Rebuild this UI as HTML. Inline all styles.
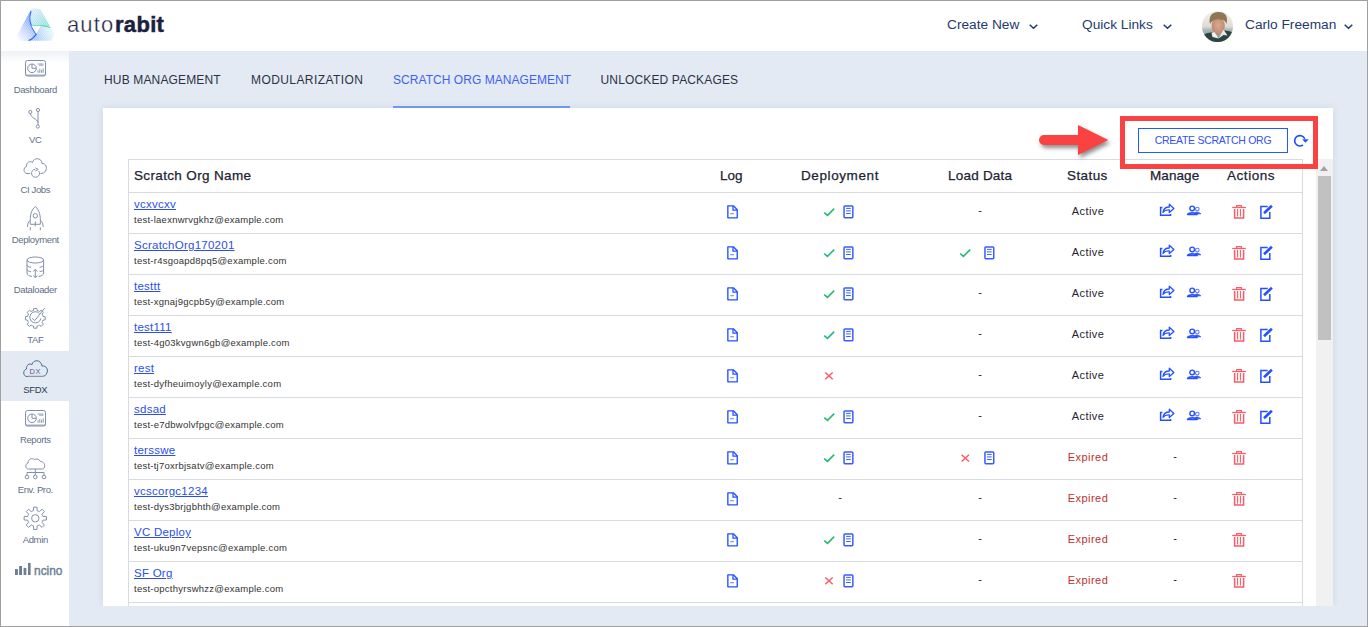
<!DOCTYPE html>
<html><head><meta charset="utf-8">
<style>
*{box-sizing:border-box;margin:0;padding:0}
html,body{width:1368px;height:627px;overflow:hidden;background:#fff}
body{font-family:"Liberation Sans",sans-serif;position:relative;line-height:1}
.a{position:absolute}
#frame{position:absolute;left:0;top:0;width:1368px;height:627px;border:1px solid #a0a0a0;z-index:50;pointer-events:none}
#header{left:0;top:0;width:1368px;height:51px;background:#fff}
#content{left:69px;top:51px;width:1299px;height:576px;background:#e4eaf3}
#side{left:0;top:51px;width:69px;height:576px;background:#fff}
.sgrad{left:0;top:51px;width:69px;height:12px;background:linear-gradient(#eef1f5,#fff)}
.nav{font-size:13.7px;color:#1f3a6e;top:18px;white-space:nowrap}
.chev{position:absolute;width:7px;height:7px;border-right:1.5px solid #243a63;border-bottom:1.5px solid #243a63;transform:rotate(45deg)}
.tab{font-size:12px;color:#2b3245;top:74px;white-space:nowrap;letter-spacing:0.05px}
.card{left:103px;top:108px;width:1230px;height:498px;background:#fff;box-shadow:0 0 7px rgba(140,155,180,0.22)}
.lbl{position:absolute;left:0.8px;width:69px;text-align:center;font-size:9.5px;letter-spacing:-0.35px;color:#5f6f86;white-space:nowrap}
.hd{font-size:13.5px;font-weight:normal;-webkit-text-stroke:0.25px #1c2333;color:#1c2333;top:169px;white-space:nowrap}
.ln{position:absolute;left:128px;width:1175px;height:1px;background:#d8dbe2}
.nm{position:absolute;left:134px;font-size:11.5px;letter-spacing:0.25px;color:#2b4fe8;text-decoration:underline;white-space:nowrap}
.em{position:absolute;left:134px;font-size:9.5px;letter-spacing:0.25px;color:#333;white-space:nowrap}
.st{position:absolute;font-size:11px;letter-spacing:0.45px;white-space:nowrap;width:80px;text-align:center;left:1048px}
.dash{position:absolute;font-size:11px;color:#222;width:20px;text-align:center}
svg{position:absolute;overflow:visible}
</style></head><body>
<div id="frame"></div>
<div class="a" id="header"></div>
<div class="a" id="content"></div>
<div class="a" id="side"></div>
<div class="a sgrad"></div>

<!-- logo --><svg style="left:0;top:0" width="60" height="50" viewBox="0 0 60 50">
  <defs>
    <linearGradient id="lgL" x1="17" y1="38" x2="33" y2="24" gradientUnits="userSpaceOnUse">
      <stop offset="0" stop-color="#dfe8ff" stop-opacity="0.4"/><stop offset="1" stop-color="#3f78ff" stop-opacity="0.7"/>
    </linearGradient>
    <linearGradient id="lgT" x1="31" y1="10" x2="50" y2="28" gradientUnits="userSpaceOnUse">
      <stop offset="0" stop-color="#a9c9f5" stop-opacity="0.45"/><stop offset="1" stop-color="#43d3bd" stop-opacity="0.75"/>
    </linearGradient>
    <linearGradient id="lgB" x1="36" y1="38" x2="54" y2="32" gradientUnits="userSpaceOnUse">
      <stop offset="0" stop-color="#4f8cff" stop-opacity="0.55"/><stop offset="1" stop-color="#b5efe5" stop-opacity="0.35"/>
    </linearGradient>
    <pattern id="hatch" width="1.6" height="1.6" patternUnits="userSpaceOnUse" patternTransform="rotate(35)">
      <rect width="0.7" height="1.6" fill="#fff" opacity="0.55"/>
    </pattern>
  </defs>
  <path d="M31 9.5 C28.5 16 28.5 24 36 34 L29 41 L21 41 C19 39 18 37 17.4 34.5 Z" fill="url(#lgL)"/>
  <path d="M31 9 C33 8.3 38 8.3 40.5 9.5 L54.4 33.9 C52 29 50 26.5 49 26 L31.4 25.6 C30.2 21 30 15 30.8 12.7 Z" fill="url(#lgT)"/>
  <path d="M36 34 L40.8 25.6 L49 26 C51 27.5 53.5 31 54.4 34 C53.5 37 52.5 39 51.4 40.7 L29 40.7 Z" fill="url(#lgB)"/>
  <path d="M17 8 H56 V42 H17 Z" fill="url(#hatch)"/>
  <path d="M31 11 C28.8 18 29 24 36.2 34.3 C34 37.5 31.5 39.5 28.5 40.5" fill="none" stroke="#2f6dff" stroke-width="1.2"/>
  <path d="M31.4 25.6 C38 25.4 45 25.4 50 27.5" fill="none" stroke="#3fd4b4" stroke-width="1"/>
  <path d="M31.4 25.8 L40.8 25.8 L36 33.5 Z" fill="#fff"/>
</svg>
<svg style="left:60px;top:5px" width="120" height="40" viewBox="60 5 120 40"><text x="67" y="32" font-family="Liberation Sans" font-size="22" letter-spacing="1.1" fill="#1b2240" stroke="#fff" stroke-width="0.35">auto</text><text x="115" y="32" font-family="Liberation Sans" font-weight="bold" font-size="22" letter-spacing="0.3" fill="#1b2240" stroke="#1b2240" stroke-width="0.5">rabit</text></svg>

<!-- nav -->
<div class="a nav" style="left:947px">Create New</div>
<svg style="left:1028.5px;top:24px" width="9" height="5" viewBox="0 0 9 5"><path d="M0.7 0.7 L4.5 4.3 L8.3 0.7" fill="none" stroke="#1f3a6e" stroke-width="1.5"/></svg>
<div class="a nav" style="left:1082px">Quick Links</div>
<svg style="left:1162.5px;top:24px" width="9" height="5" viewBox="0 0 9 5"><path d="M0.7 0.7 L4.5 4.3 L8.3 0.7" fill="none" stroke="#1f3a6e" stroke-width="1.5"/></svg>
<svg style="left:1202px;top:10.75px" width="31" height="31" viewBox="0 0 31 31">
<defs><clipPath id="avc"><circle cx="15.5" cy="15.5" r="15.5"/></clipPath>
<linearGradient id="avbg" x1="0" y1="0" x2="0" y2="1"><stop offset="0" stop-color="#f3f0ec"/><stop offset="0.5" stop-color="#e0dbd4"/><stop offset="0.62" stop-color="#a9b4b6"/><stop offset="1" stop-color="#7d8c90"/></linearGradient>
<radialGradient id="avface" cx="0.5" cy="0.45" r="0.6"><stop offset="0" stop-color="#d9aa90"/><stop offset="1" stop-color="#b8856a"/></radialGradient>
</defs>
<g clip-path="url(#avc)">
<rect width="31" height="31" fill="url(#avbg)"/>
<ellipse cx="16.2" cy="15" rx="6.6" ry="9" fill="url(#avface)"/>
<path d="M8 13 C6 4 11.5 0.5 17 1 C23 1 26.5 5 24.5 13 C23.5 10.5 22 8.5 20 9 C17 8 14 8.2 11.5 9.5 C10 10.5 9 11.5 8 13 Z" fill="#8f7656"/>
<path d="M0 31 V25 C3 22.5 6 21.5 10 21.5 L16.5 27.5 L22 19.5 C26 19.5 29.5 20.5 31 22 V31 Z" fill="#2c4540"/>
<path d="M9.5 22.3 L12.5 21 L16.5 27.5 L10.5 26 Z" fill="#f0f0f0"/>
<path d="M21.5 18.5 L25.5 24.5 L21.5 24 L16.5 27.5 Z" fill="#e8e8e8"/>
</g></svg>
<div class="a nav" style="left:1245px">Carlo Freeman</div>
<svg style="left:1343.5px;top:24px" width="9" height="5" viewBox="0 0 9 5"><path d="M0.7 0.7 L4.5 4.3 L8.3 0.7" fill="none" stroke="#1f3a6e" stroke-width="1.5"/></svg>

<!-- sidebar items -->
<div class="a" style="left:0;top:351px;width:69px;height:50px;background:#e4eaf3"></div>
<div class="a" style="left:0;top:51px;width:69px;height:560px">
  <div class="lbl" style="top:34px">Dashboard</div>
  <div class="lbl" style="top:84px">VC</div>
  <div class="lbl" style="top:134px">CI Jobs</div>
  <div class="lbl" style="top:184px">Deployment</div>
  <div class="lbl" style="top:234px">Dataloader</div>
  <div class="lbl" style="top:284px">TAF</div>
  <div class="lbl" style="top:334px;color:#2c3a55">SFDX</div>
  <div class="lbl" style="top:384px">Reports</div>
  <div class="lbl" style="top:434px">Env. Pro.</div>
  <div class="lbl" style="top:484px">Admin</div>
</div>

<!--side--><svg style="left:0;top:0" width="69" height="627" viewBox="0 0 69 627"><rect x="25.5" y="60.5" width="20" height="15.5" rx="2" fill="none" stroke="#8190aa" stroke-width="1"/><path d="M25.5 75.2 H45.5" stroke="#8190aa" stroke-width="1.6" opacity="0.6"/><circle cx="32" cy="68.3" r="4.3" fill="none" stroke="#8190aa" stroke-width="1"/><path d="M32 64.0 L32 68.3 L36.3 68.3" fill="none" stroke="#8190aa" stroke-width="1"/><path d="M37.5 64 H43.5 M39 65.2 H43.5" stroke="#8190aa" stroke-width="0.8"/><path d="M38 72.8 V70.3" stroke="#8190aa" stroke-width="0.9"/><path d="M39.8 72.8 V68.8" stroke="#8190aa" stroke-width="0.9"/><path d="M41.6 72.8 V69.8" stroke="#8190aa" stroke-width="0.9"/><path d="M43.2 72.8 V68.3" stroke="#8190aa" stroke-width="0.9"/><rect x="25.5" y="410.5" width="20" height="15.5" rx="2" fill="none" stroke="#8190aa" stroke-width="1"/><path d="M25.5 425.2 H45.5" stroke="#8190aa" stroke-width="1.6" opacity="0.6"/><circle cx="32" cy="418.3" r="4.3" fill="none" stroke="#8190aa" stroke-width="1"/><path d="M32 414.0 L32 418.3 L36.3 418.3" fill="none" stroke="#8190aa" stroke-width="1"/><path d="M37.5 414 H43.5 M39 415.2 H43.5" stroke="#8190aa" stroke-width="0.8"/><path d="M38 422.8 V420.3" stroke="#8190aa" stroke-width="0.9"/><path d="M39.8 422.8 V418.8" stroke="#8190aa" stroke-width="0.9"/><path d="M41.6 422.8 V419.8" stroke="#8190aa" stroke-width="0.9"/><path d="M43.2 422.8 V418.3" stroke="#8190aa" stroke-width="0.9"/><circle cx="30.3" cy="112" r="1.6" fill="none" stroke="#8190aa" stroke-width="1"/><circle cx="38" cy="110" r="1.6" fill="none" stroke="#8190aa" stroke-width="1"/><circle cx="37.8" cy="126.5" r="1.6" fill="none" stroke="#8190aa" stroke-width="1"/><path d="M38 111.6 V124.9 M30.5 113.6 C30.5 118 37 118.5 38 122.5" fill="none" stroke="#8190aa" stroke-width="1"/><path d="M30 173.5 H27 C23.5 173.5 22.8 167.5 26.5 166.5 C26 162.5 30 160.5 32.5 162.5 C33.5 157.5 41.5 157 42 163.5 C46 163 47.5 168 45.5 171 C44.5 173 42.5 173.5 40.5 173.5" fill="none" stroke="#8190aa" stroke-width="1"/><path d="M38.8 171 A4 4 0 1 1 35.3 169.3" fill="none" stroke="#8190aa" stroke-width="1"/><path d="M35.3 167.8 L38.3 169.5 L35.3 171" fill="none" stroke="#8190aa" stroke-width="1"/><path d="M35.3 206.5 C31 210 29.8 216 30.3 224.3 H40.3 C40.8 216 39.6 210 35.3 206.5 Z" fill="none" stroke="#8190aa" stroke-width="1"/><circle cx="35.3" cy="215.8" r="2.2" fill="none" stroke="#8190aa" stroke-width="1"/><path d="M30 220.5 C28 222 27.5 224.5 27.5 227 M40.6 220.5 C42.6 222 43.1 224.5 43.1 227 M35.3 221.5 V226.3 M30.3 227.2 V230.3 M40.3 227.2 V230.3" fill="none" stroke="#8190aa" stroke-width="1"/><ellipse cx="35.3" cy="260" rx="8.3" ry="3" fill="none" stroke="#8190aa" stroke-width="1"/><path d="M27 260 V273 C27 275 29 276 32 276.5 M43.6 260 V273 C43.6 275 41.6 276 38.6 276.5" fill="none" stroke="#8190aa" stroke-width="1"/><path d="M27 265 C27 266.5 29 267 31 267.3 M43.6 265 C43.6 266.5 41.6 267 39.6 267.3 M27 269.5 C27 271 29 271.3 31 271.6 M43.6 269.5 C43.6 271 41.6 271.3 39.6 271.6" fill="none" stroke="#8190aa" stroke-width="1"/><path d="M35.3 269.5 V277.5 M33.3 271.5 L35.3 269.3 L37.3 271.5 M33.3 275.5 L35.3 277.7 L37.3 275.5" fill="none" stroke="#8190aa" stroke-width="1"/><path d="M32.24 310.91 L33.48 310.51 L33.71 308.43 L36.89 308.43 L37.12 310.51 L38.36 310.91 L39.52 311.50 L41.15 310.19 L43.41 312.45 L42.10 314.08 L42.69 315.24 L43.09 316.48 L45.17 316.71 L45.17 319.89 L43.09 320.12 L42.69 321.36 L42.10 322.52 L43.41 324.15 L41.15 326.41 L39.52 325.10 L38.36 325.69 L37.12 326.09 L36.89 328.17 L33.71 328.17 L33.48 326.09 L32.24 325.69 L31.08 325.10 L29.45 326.41 L27.19 324.15 L28.50 322.52 L27.91 321.36 L27.51 320.12 L25.43 319.89 L25.43 316.71 L27.51 316.48 L27.91 315.24 L28.50 314.08 L27.19 312.45 L29.45 310.19 L31.08 311.50 Z" fill="none" stroke="#8190aa" stroke-width="1" stroke-linejoin="round"/><path d="M39.5 313.5 A5.6 5.6 0 1 0 40.9 318.3" fill="none" stroke="#8190aa" stroke-width="1"/><path d="M32.2 318.3 L34.8 320.6 L44.6 308.2" fill="none" stroke="#8190aa" stroke-width="1"/><path d="M27 376.5 C23 376.5 22.5 370 26.5 369 C26 365 29.5 363 32 364.5 C33 359.5 41 359 42 366 C46.5 365.5 48 369.5 47.2 372 C46.5 375 44.5 376.5 42 376.5 Z" fill="none" stroke="#4d6a92" stroke-width="1"/><path d="M27.5 376.3 H44" stroke="#8fa0b5" stroke-width="1.2"/><text x="29.5" y="373.7" font-family="Liberation Sans" font-size="7.5" fill="#5a4f8a">D</text><text x="35.5" y="373.7" font-family="Liberation Sans" font-size="7.5" fill="#4d6a92">X</text><path d="M28.5 469 C25 469 25 463.5 28 463 C28 459 32 457.5 34.5 459.5 C36 458.5 39.5 459 40.5 461.5 C43.5 461.5 45.5 464.5 44.5 467 C44 468.5 43 469 41.5 469 Z" fill="none" stroke="#8190aa" stroke-width="1"/><path d="M35.3 469 V475 M27 475 V472.5 H44 V475" fill="none" stroke="#8190aa" stroke-width="1"/><circle cx="27" cy="477" r="1.8" fill="none" stroke="#8190aa" stroke-width="1"/><circle cx="35.3" cy="477" r="1.8" fill="none" stroke="#8190aa" stroke-width="1"/><circle cx="44" cy="477" r="1.8" fill="none" stroke="#8190aa" stroke-width="1"/><path d="M32.32 511.09 L33.42 510.73 L33.66 507.12 L36.94 507.12 L37.18 510.73 L38.28 511.09 L39.32 511.62 L42.04 509.23 L44.37 511.56 L41.98 514.28 L42.51 515.32 L42.87 516.42 L46.48 516.66 L46.48 519.94 L42.87 520.18 L42.51 521.28 L41.98 522.32 L44.37 525.04 L42.04 527.37 L39.32 524.98 L38.28 525.51 L37.18 525.87 L36.94 529.48 L33.66 529.48 L33.42 525.87 L32.32 525.51 L31.28 524.98 L28.56 527.37 L26.23 525.04 L28.62 522.32 L28.09 521.28 L27.73 520.18 L24.12 519.94 L24.12 516.66 L27.73 516.42 L28.09 515.32 L28.62 514.28 L26.23 511.56 L28.56 509.23 L31.28 511.62 Z" fill="none" stroke="#8190aa" stroke-width="1" stroke-linejoin="round"/><circle cx="35.3" cy="518.3" r="3.7" fill="none" stroke="#8190aa" stroke-width="1"/><rect x="15" y="569.1" width="2.8999999999999986" height="5.899999999999977" fill="#6d7f95"/><rect x="19.1" y="566" width="2.8999999999999986" height="9" fill="#6d7f95"/><rect x="23.6" y="567.9" width="2.6999999999999993" height="7.100000000000023" fill="#6d7f95"/><rect x="28" y="562.9" width="2.6000000000000014" height="12.100000000000023" fill="#6d7f95"/><text x="34" y="575" font-family="Liberation Sans" font-weight="normal" font-size="13.5" fill="#6d7f95" stroke="#6d7f95" stroke-width="0.45" textLength="28.5" lengthAdjust="spacingAndGlyphs">ncino</text></svg><!--/side-->
<!-- tabs -->
<div class="a tab" style="left:104px;letter-spacing:0.15px">HUB MANAGEMENT</div>
<div class="a tab" style="left:251px;letter-spacing:0.42px">MODULARIZATION</div>
<div class="a tab" style="left:393px;color:#3d62f0">SCRATCH ORG MANAGEMENT</div>
<div class="a tab" style="left:600.5px;letter-spacing:0.15px">UNLOCKED PACKAGES</div>
<div class="a" style="left:393px;top:106px;width:177px;height:2px;background:#6d9bf1"></div>

<div class="a card"></div>
<div class="a" id="shcover" style="left:69px;top:606px;width:1299px;height:21px;background:#e4eaf3"></div>

<!-- table frame -->
<div class="a" style="left:128px;top:159px;width:1175px;height:447px;border:1px solid #d8dbe2;border-bottom:none"></div>
<div class="ln" style="top:192px"></div>

<div class="a hd" style="left:134px;letter-spacing:0.35px">Scratch Org Name</div>
<div class="a hd" style="left:720px;letter-spacing:0.05px">Log</div>
<div class="a hd" style="left:801px;letter-spacing:0.6px">Deployment</div>
<div class="a hd" style="left:948px;letter-spacing:0.22px">Load Data</div>
<div class="a hd" style="left:1067px;letter-spacing:0.42px">Status</div>
<div class="a hd" style="left:1150px;letter-spacing:0.08px">Manage</div>
<div class="a hd" style="left:1227px;letter-spacing:0.55px">Actions</div>

<div id="rows">
<div class="ln" style="top:233px"></div>
<div class="nm" style="top:199.1px">vcxvcxv</div>
<div class="em" style="top:214.96px">test-laexnwrvgkhz@example.com</div>
<div class="dash" style="left:970px;top:205px">-</div>
<div class="st" style="top:205.7px;color:#1f2533">Active</div>
<svg style="left:700px;top:192px" width="600" height="41" viewBox="0 0 600 41"><path d="M27.85 13.85 H33.4 L37.25 17.7 V25.85 H27.85 Z" fill="none" stroke="#2450ff" stroke-width="1.35" stroke-linejoin="round"/><path d="M33 14 V18.2 H37.2" fill="none" stroke="#2450ff" stroke-width="1.25"/><path d="M30.2 21.7 H33.9" stroke="#6f86ff" stroke-width="1.1"/><path d="M124.2 20.6 L127.5 23.3 L134.2 16.6" fill="none" stroke="#27b97a" stroke-width="1.6"/><rect x="144.05" y="14.05" width="8.8" height="11.6" rx="0.8" fill="none" stroke="#3a5cff" stroke-width="1.5"/><path d="M146.1 16.4 H150.8 M146.1 18.9 H150.8 M146.1 21.5 H150.8" stroke="#2450ff" stroke-width="0.9"/><path d="M462.4 15.5 H460.6 V23.2 H470.6 V22" fill="none" stroke="#2450ff" stroke-width="1.5"/><path d="M463 20.4 C463.5 17 466 15 469.3 15 V12.2 L473.9 16.4 L469.3 20.6 V18 C466.5 17.8 464.5 18.5 463 20.4 Z" fill="none" stroke="#2450ff" stroke-width="1.3" stroke-linejoin="round"/><circle cx="497.3" cy="17.1" r="1.8" fill="none" stroke="#5f7bff" stroke-width="1.1"/><path d="M495.5 20.3 C497.5 20 499.5 20.5 500.8 21.8 L496 21.8 Z" fill="#2450ff" stroke="#2450ff" stroke-width="0.8"/><circle cx="492.2" cy="16.4" r="2.3" fill="#fff" stroke="#2450ff" stroke-width="1.4"/><path d="M487.5 22.6 C488 20 496.6 20 497.1 22.6 Z" fill="#fff" stroke="#2450ff" stroke-width="1.5" stroke-linejoin="round"/><path d="M532.2 15.5 H545.9" stroke="#f95c66" stroke-width="1.3"/><path d="M536.6 15.2 V13.6 H541.4 V15.2" fill="none" stroke="#f95c66" stroke-width="1.1"/><path d="M534.6 17.1 V25.9 H543.6 V17.1" fill="none" stroke="#f95c66" stroke-width="1.5"/><path d="M537.6 17.1 V24.6 M540.4 17.1 V24.6" stroke="#f95c66" stroke-width="1.1"/><path d="M567.7 14.4 H560.9 V26.3 H569.8 V20" fill="none" stroke="#2450ff" stroke-width="1.5"/><path d="M564 21.3 L571.9 13.7" fill="none" stroke="#2450ff" stroke-width="2.6"/></svg>
<div class="ln" style="top:274px"></div>
<div class="nm" style="top:240.1px">ScratchOrg170201</div>
<div class="em" style="top:255.96px">test-r4sgoapd8pq5@example.com</div>
<div class="st" style="top:246.7px;color:#1f2533">Active</div>
<svg style="left:700px;top:233px" width="600" height="41" viewBox="0 0 600 41"><path d="M27.85 13.85 H33.4 L37.25 17.7 V25.85 H27.85 Z" fill="none" stroke="#2450ff" stroke-width="1.35" stroke-linejoin="round"/><path d="M33 14 V18.2 H37.2" fill="none" stroke="#2450ff" stroke-width="1.25"/><path d="M30.2 21.7 H33.9" stroke="#6f86ff" stroke-width="1.1"/><path d="M124.2 20.6 L127.5 23.3 L134.2 16.6" fill="none" stroke="#27b97a" stroke-width="1.6"/><rect x="144.05" y="14.05" width="8.8" height="11.6" rx="0.8" fill="none" stroke="#3a5cff" stroke-width="1.5"/><path d="M146.1 16.4 H150.8 M146.1 18.9 H150.8 M146.1 21.5 H150.8" stroke="#2450ff" stroke-width="0.9"/><path d="M260.2 20.6 L263.5 23.3 L270.2 16.6" fill="none" stroke="#27b97a" stroke-width="1.6"/><rect x="284.95000000000005" y="14.05" width="8.8" height="11.6" rx="0.8" fill="none" stroke="#3a5cff" stroke-width="1.5"/><path d="M287.0 16.4 H291.70000000000005 M287.0 18.9 H291.70000000000005 M287.0 21.5 H291.70000000000005" stroke="#2450ff" stroke-width="0.9"/><path d="M462.4 15.5 H460.6 V23.2 H470.6 V22" fill="none" stroke="#2450ff" stroke-width="1.5"/><path d="M463 20.4 C463.5 17 466 15 469.3 15 V12.2 L473.9 16.4 L469.3 20.6 V18 C466.5 17.8 464.5 18.5 463 20.4 Z" fill="none" stroke="#2450ff" stroke-width="1.3" stroke-linejoin="round"/><circle cx="497.3" cy="17.1" r="1.8" fill="none" stroke="#5f7bff" stroke-width="1.1"/><path d="M495.5 20.3 C497.5 20 499.5 20.5 500.8 21.8 L496 21.8 Z" fill="#2450ff" stroke="#2450ff" stroke-width="0.8"/><circle cx="492.2" cy="16.4" r="2.3" fill="#fff" stroke="#2450ff" stroke-width="1.4"/><path d="M487.5 22.6 C488 20 496.6 20 497.1 22.6 Z" fill="#fff" stroke="#2450ff" stroke-width="1.5" stroke-linejoin="round"/><path d="M532.2 15.5 H545.9" stroke="#f95c66" stroke-width="1.3"/><path d="M536.6 15.2 V13.6 H541.4 V15.2" fill="none" stroke="#f95c66" stroke-width="1.1"/><path d="M534.6 17.1 V25.9 H543.6 V17.1" fill="none" stroke="#f95c66" stroke-width="1.5"/><path d="M537.6 17.1 V24.6 M540.4 17.1 V24.6" stroke="#f95c66" stroke-width="1.1"/><path d="M567.7 14.4 H560.9 V26.3 H569.8 V20" fill="none" stroke="#2450ff" stroke-width="1.5"/><path d="M564 21.3 L571.9 13.7" fill="none" stroke="#2450ff" stroke-width="2.6"/></svg>
<div class="ln" style="top:315px"></div>
<div class="nm" style="top:281.1px">testtt</div>
<div class="em" style="top:296.96px">test-xgnaj9gcpb5y@example.com</div>
<div class="dash" style="left:970px;top:287px">-</div>
<div class="st" style="top:287.7px;color:#1f2533">Active</div>
<svg style="left:700px;top:274px" width="600" height="41" viewBox="0 0 600 41"><path d="M27.85 13.85 H33.4 L37.25 17.7 V25.85 H27.85 Z" fill="none" stroke="#2450ff" stroke-width="1.35" stroke-linejoin="round"/><path d="M33 14 V18.2 H37.2" fill="none" stroke="#2450ff" stroke-width="1.25"/><path d="M30.2 21.7 H33.9" stroke="#6f86ff" stroke-width="1.1"/><path d="M124.2 20.6 L127.5 23.3 L134.2 16.6" fill="none" stroke="#27b97a" stroke-width="1.6"/><rect x="144.05" y="14.05" width="8.8" height="11.6" rx="0.8" fill="none" stroke="#3a5cff" stroke-width="1.5"/><path d="M146.1 16.4 H150.8 M146.1 18.9 H150.8 M146.1 21.5 H150.8" stroke="#2450ff" stroke-width="0.9"/><path d="M462.4 15.5 H460.6 V23.2 H470.6 V22" fill="none" stroke="#2450ff" stroke-width="1.5"/><path d="M463 20.4 C463.5 17 466 15 469.3 15 V12.2 L473.9 16.4 L469.3 20.6 V18 C466.5 17.8 464.5 18.5 463 20.4 Z" fill="none" stroke="#2450ff" stroke-width="1.3" stroke-linejoin="round"/><circle cx="497.3" cy="17.1" r="1.8" fill="none" stroke="#5f7bff" stroke-width="1.1"/><path d="M495.5 20.3 C497.5 20 499.5 20.5 500.8 21.8 L496 21.8 Z" fill="#2450ff" stroke="#2450ff" stroke-width="0.8"/><circle cx="492.2" cy="16.4" r="2.3" fill="#fff" stroke="#2450ff" stroke-width="1.4"/><path d="M487.5 22.6 C488 20 496.6 20 497.1 22.6 Z" fill="#fff" stroke="#2450ff" stroke-width="1.5" stroke-linejoin="round"/><path d="M532.2 15.5 H545.9" stroke="#f95c66" stroke-width="1.3"/><path d="M536.6 15.2 V13.6 H541.4 V15.2" fill="none" stroke="#f95c66" stroke-width="1.1"/><path d="M534.6 17.1 V25.9 H543.6 V17.1" fill="none" stroke="#f95c66" stroke-width="1.5"/><path d="M537.6 17.1 V24.6 M540.4 17.1 V24.6" stroke="#f95c66" stroke-width="1.1"/><path d="M567.7 14.4 H560.9 V26.3 H569.8 V20" fill="none" stroke="#2450ff" stroke-width="1.5"/><path d="M564 21.3 L571.9 13.7" fill="none" stroke="#2450ff" stroke-width="2.6"/></svg>
<div class="ln" style="top:356px"></div>
<div class="nm" style="top:322.1px">test111</div>
<div class="em" style="top:337.96px">test-4g03kvgwn6gb@example.com</div>
<div class="dash" style="left:970px;top:328px">-</div>
<div class="st" style="top:328.7px;color:#1f2533">Active</div>
<svg style="left:700px;top:315px" width="600" height="41" viewBox="0 0 600 41"><path d="M27.85 13.85 H33.4 L37.25 17.7 V25.85 H27.85 Z" fill="none" stroke="#2450ff" stroke-width="1.35" stroke-linejoin="round"/><path d="M33 14 V18.2 H37.2" fill="none" stroke="#2450ff" stroke-width="1.25"/><path d="M30.2 21.7 H33.9" stroke="#6f86ff" stroke-width="1.1"/><path d="M124.2 20.6 L127.5 23.3 L134.2 16.6" fill="none" stroke="#27b97a" stroke-width="1.6"/><rect x="144.05" y="14.05" width="8.8" height="11.6" rx="0.8" fill="none" stroke="#3a5cff" stroke-width="1.5"/><path d="M146.1 16.4 H150.8 M146.1 18.9 H150.8 M146.1 21.5 H150.8" stroke="#2450ff" stroke-width="0.9"/><path d="M462.4 15.5 H460.6 V23.2 H470.6 V22" fill="none" stroke="#2450ff" stroke-width="1.5"/><path d="M463 20.4 C463.5 17 466 15 469.3 15 V12.2 L473.9 16.4 L469.3 20.6 V18 C466.5 17.8 464.5 18.5 463 20.4 Z" fill="none" stroke="#2450ff" stroke-width="1.3" stroke-linejoin="round"/><circle cx="497.3" cy="17.1" r="1.8" fill="none" stroke="#5f7bff" stroke-width="1.1"/><path d="M495.5 20.3 C497.5 20 499.5 20.5 500.8 21.8 L496 21.8 Z" fill="#2450ff" stroke="#2450ff" stroke-width="0.8"/><circle cx="492.2" cy="16.4" r="2.3" fill="#fff" stroke="#2450ff" stroke-width="1.4"/><path d="M487.5 22.6 C488 20 496.6 20 497.1 22.6 Z" fill="#fff" stroke="#2450ff" stroke-width="1.5" stroke-linejoin="round"/><path d="M532.2 15.5 H545.9" stroke="#f95c66" stroke-width="1.3"/><path d="M536.6 15.2 V13.6 H541.4 V15.2" fill="none" stroke="#f95c66" stroke-width="1.1"/><path d="M534.6 17.1 V25.9 H543.6 V17.1" fill="none" stroke="#f95c66" stroke-width="1.5"/><path d="M537.6 17.1 V24.6 M540.4 17.1 V24.6" stroke="#f95c66" stroke-width="1.1"/><path d="M567.7 14.4 H560.9 V26.3 H569.8 V20" fill="none" stroke="#2450ff" stroke-width="1.5"/><path d="M564 21.3 L571.9 13.7" fill="none" stroke="#2450ff" stroke-width="2.6"/></svg>
<div class="ln" style="top:397px"></div>
<div class="nm" style="top:363.1px">rest</div>
<div class="em" style="top:378.96px">test-dyfheuimoyly@example.com</div>
<div class="dash" style="left:970px;top:369px">-</div>
<div class="st" style="top:369.7px;color:#1f2533">Active</div>
<svg style="left:700px;top:356px" width="600" height="41" viewBox="0 0 600 41"><path d="M27.85 13.85 H33.4 L37.25 17.7 V25.85 H27.85 Z" fill="none" stroke="#2450ff" stroke-width="1.35" stroke-linejoin="round"/><path d="M33 14 V18.2 H37.2" fill="none" stroke="#2450ff" stroke-width="1.25"/><path d="M30.2 21.7 H33.9" stroke="#6f86ff" stroke-width="1.1"/><path d="M125.3 16.5 L132.7 23.3 M132.7 16.5 L125.3 23.3" fill="none" stroke="#f95c66" stroke-width="1.5"/><path d="M462.4 15.5 H460.6 V23.2 H470.6 V22" fill="none" stroke="#2450ff" stroke-width="1.5"/><path d="M463 20.4 C463.5 17 466 15 469.3 15 V12.2 L473.9 16.4 L469.3 20.6 V18 C466.5 17.8 464.5 18.5 463 20.4 Z" fill="none" stroke="#2450ff" stroke-width="1.3" stroke-linejoin="round"/><circle cx="497.3" cy="17.1" r="1.8" fill="none" stroke="#5f7bff" stroke-width="1.1"/><path d="M495.5 20.3 C497.5 20 499.5 20.5 500.8 21.8 L496 21.8 Z" fill="#2450ff" stroke="#2450ff" stroke-width="0.8"/><circle cx="492.2" cy="16.4" r="2.3" fill="#fff" stroke="#2450ff" stroke-width="1.4"/><path d="M487.5 22.6 C488 20 496.6 20 497.1 22.6 Z" fill="#fff" stroke="#2450ff" stroke-width="1.5" stroke-linejoin="round"/><path d="M532.2 15.5 H545.9" stroke="#f95c66" stroke-width="1.3"/><path d="M536.6 15.2 V13.6 H541.4 V15.2" fill="none" stroke="#f95c66" stroke-width="1.1"/><path d="M534.6 17.1 V25.9 H543.6 V17.1" fill="none" stroke="#f95c66" stroke-width="1.5"/><path d="M537.6 17.1 V24.6 M540.4 17.1 V24.6" stroke="#f95c66" stroke-width="1.1"/><path d="M567.7 14.4 H560.9 V26.3 H569.8 V20" fill="none" stroke="#2450ff" stroke-width="1.5"/><path d="M564 21.3 L571.9 13.7" fill="none" stroke="#2450ff" stroke-width="2.6"/></svg>
<div class="ln" style="top:438px"></div>
<div class="nm" style="top:404.1px">sdsad</div>
<div class="em" style="top:419.96px">test-e7dbwolvfpgc@example.com</div>
<div class="dash" style="left:970px;top:410px">-</div>
<div class="st" style="top:410.7px;color:#1f2533">Active</div>
<svg style="left:700px;top:397px" width="600" height="41" viewBox="0 0 600 41"><path d="M27.85 13.85 H33.4 L37.25 17.7 V25.85 H27.85 Z" fill="none" stroke="#2450ff" stroke-width="1.35" stroke-linejoin="round"/><path d="M33 14 V18.2 H37.2" fill="none" stroke="#2450ff" stroke-width="1.25"/><path d="M30.2 21.7 H33.9" stroke="#6f86ff" stroke-width="1.1"/><path d="M124.2 20.6 L127.5 23.3 L134.2 16.6" fill="none" stroke="#27b97a" stroke-width="1.6"/><rect x="144.05" y="14.05" width="8.8" height="11.6" rx="0.8" fill="none" stroke="#3a5cff" stroke-width="1.5"/><path d="M146.1 16.4 H150.8 M146.1 18.9 H150.8 M146.1 21.5 H150.8" stroke="#2450ff" stroke-width="0.9"/><path d="M462.4 15.5 H460.6 V23.2 H470.6 V22" fill="none" stroke="#2450ff" stroke-width="1.5"/><path d="M463 20.4 C463.5 17 466 15 469.3 15 V12.2 L473.9 16.4 L469.3 20.6 V18 C466.5 17.8 464.5 18.5 463 20.4 Z" fill="none" stroke="#2450ff" stroke-width="1.3" stroke-linejoin="round"/><circle cx="497.3" cy="17.1" r="1.8" fill="none" stroke="#5f7bff" stroke-width="1.1"/><path d="M495.5 20.3 C497.5 20 499.5 20.5 500.8 21.8 L496 21.8 Z" fill="#2450ff" stroke="#2450ff" stroke-width="0.8"/><circle cx="492.2" cy="16.4" r="2.3" fill="#fff" stroke="#2450ff" stroke-width="1.4"/><path d="M487.5 22.6 C488 20 496.6 20 497.1 22.6 Z" fill="#fff" stroke="#2450ff" stroke-width="1.5" stroke-linejoin="round"/><path d="M532.2 15.5 H545.9" stroke="#f95c66" stroke-width="1.3"/><path d="M536.6 15.2 V13.6 H541.4 V15.2" fill="none" stroke="#f95c66" stroke-width="1.1"/><path d="M534.6 17.1 V25.9 H543.6 V17.1" fill="none" stroke="#f95c66" stroke-width="1.5"/><path d="M537.6 17.1 V24.6 M540.4 17.1 V24.6" stroke="#f95c66" stroke-width="1.1"/><path d="M567.7 14.4 H560.9 V26.3 H569.8 V20" fill="none" stroke="#2450ff" stroke-width="1.5"/><path d="M564 21.3 L571.9 13.7" fill="none" stroke="#2450ff" stroke-width="2.6"/></svg>
<div class="ln" style="top:479px"></div>
<div class="nm" style="top:445.1px">tersswe</div>
<div class="em" style="top:460.96px">test-tj7oxrbjsatv@example.com</div>
<div class="st" style="top:451.7px;color:#c0302e">Expired</div>
<div class="dash" style="left:1165px;top:451px">-</div>
<svg style="left:700px;top:438px" width="600" height="41" viewBox="0 0 600 41"><path d="M27.85 13.85 H33.4 L37.25 17.7 V25.85 H27.85 Z" fill="none" stroke="#2450ff" stroke-width="1.35" stroke-linejoin="round"/><path d="M33 14 V18.2 H37.2" fill="none" stroke="#2450ff" stroke-width="1.25"/><path d="M30.2 21.7 H33.9" stroke="#6f86ff" stroke-width="1.1"/><path d="M124.2 20.6 L127.5 23.3 L134.2 16.6" fill="none" stroke="#27b97a" stroke-width="1.6"/><rect x="144.05" y="14.05" width="8.8" height="11.6" rx="0.8" fill="none" stroke="#3a5cff" stroke-width="1.5"/><path d="M146.1 16.4 H150.8 M146.1 18.9 H150.8 M146.1 21.5 H150.8" stroke="#2450ff" stroke-width="0.9"/><path d="M261.6 16.7 L269.0 23.5 M269.0 16.7 L261.6 23.5" fill="none" stroke="#f95c66" stroke-width="1.5"/><rect x="284.95000000000005" y="14.05" width="8.8" height="11.6" rx="0.8" fill="none" stroke="#3a5cff" stroke-width="1.5"/><path d="M287.0 16.4 H291.70000000000005 M287.0 18.9 H291.70000000000005 M287.0 21.5 H291.70000000000005" stroke="#2450ff" stroke-width="0.9"/><path d="M532.2 15.5 H545.9" stroke="#f95c66" stroke-width="1.3"/><path d="M536.6 15.2 V13.6 H541.4 V15.2" fill="none" stroke="#f95c66" stroke-width="1.1"/><path d="M534.6 17.1 V25.9 H543.6 V17.1" fill="none" stroke="#f95c66" stroke-width="1.5"/><path d="M537.6 17.1 V24.6 M540.4 17.1 V24.6" stroke="#f95c66" stroke-width="1.1"/></svg>
<div class="ln" style="top:520px"></div>
<div class="nm" style="top:486.1px">vcscorgc1234</div>
<div class="em" style="top:501.96px">test-dys3brjgbhth@example.com</div>
<div class="dash" style="left:830px;top:492px">-</div>
<div class="dash" style="left:970px;top:492px">-</div>
<div class="st" style="top:492.7px;color:#c0302e">Expired</div>
<div class="dash" style="left:1165px;top:492px">-</div>
<svg style="left:700px;top:479px" width="600" height="41" viewBox="0 0 600 41"><path d="M27.85 13.85 H33.4 L37.25 17.7 V25.85 H27.85 Z" fill="none" stroke="#2450ff" stroke-width="1.35" stroke-linejoin="round"/><path d="M33 14 V18.2 H37.2" fill="none" stroke="#2450ff" stroke-width="1.25"/><path d="M30.2 21.7 H33.9" stroke="#6f86ff" stroke-width="1.1"/><path d="M532.2 15.5 H545.9" stroke="#f95c66" stroke-width="1.3"/><path d="M536.6 15.2 V13.6 H541.4 V15.2" fill="none" stroke="#f95c66" stroke-width="1.1"/><path d="M534.6 17.1 V25.9 H543.6 V17.1" fill="none" stroke="#f95c66" stroke-width="1.5"/><path d="M537.6 17.1 V24.6 M540.4 17.1 V24.6" stroke="#f95c66" stroke-width="1.1"/></svg>
<div class="ln" style="top:561px"></div>
<div class="nm" style="top:527.1px">VC Deploy</div>
<div class="em" style="top:542.96px">test-uku9n7vepsnc@example.com</div>
<div class="dash" style="left:970px;top:533px">-</div>
<div class="st" style="top:533.7px;color:#c0302e">Expired</div>
<div class="dash" style="left:1165px;top:533px">-</div>
<svg style="left:700px;top:520px" width="600" height="41" viewBox="0 0 600 41"><path d="M27.85 13.85 H33.4 L37.25 17.7 V25.85 H27.85 Z" fill="none" stroke="#2450ff" stroke-width="1.35" stroke-linejoin="round"/><path d="M33 14 V18.2 H37.2" fill="none" stroke="#2450ff" stroke-width="1.25"/><path d="M30.2 21.7 H33.9" stroke="#6f86ff" stroke-width="1.1"/><path d="M124.2 20.6 L127.5 23.3 L134.2 16.6" fill="none" stroke="#27b97a" stroke-width="1.6"/><rect x="144.05" y="14.05" width="8.8" height="11.6" rx="0.8" fill="none" stroke="#3a5cff" stroke-width="1.5"/><path d="M146.1 16.4 H150.8 M146.1 18.9 H150.8 M146.1 21.5 H150.8" stroke="#2450ff" stroke-width="0.9"/><path d="M532.2 15.5 H545.9" stroke="#f95c66" stroke-width="1.3"/><path d="M536.6 15.2 V13.6 H541.4 V15.2" fill="none" stroke="#f95c66" stroke-width="1.1"/><path d="M534.6 17.1 V25.9 H543.6 V17.1" fill="none" stroke="#f95c66" stroke-width="1.5"/><path d="M537.6 17.1 V24.6 M540.4 17.1 V24.6" stroke="#f95c66" stroke-width="1.1"/></svg>
<div class="ln" style="top:602px"></div>
<div class="nm" style="top:568.1px">SF Org</div>
<div class="em" style="top:583.96px">test-opcthyrswhzz@example.com</div>
<div class="dash" style="left:970px;top:574px">-</div>
<div class="st" style="top:574.7px;color:#c0302e">Expired</div>
<div class="dash" style="left:1165px;top:574px">-</div>
<svg style="left:700px;top:561px" width="600" height="41" viewBox="0 0 600 41"><path d="M27.85 13.85 H33.4 L37.25 17.7 V25.85 H27.85 Z" fill="none" stroke="#2450ff" stroke-width="1.35" stroke-linejoin="round"/><path d="M33 14 V18.2 H37.2" fill="none" stroke="#2450ff" stroke-width="1.25"/><path d="M30.2 21.7 H33.9" stroke="#6f86ff" stroke-width="1.1"/><path d="M125.3 16.5 L132.7 23.3 M132.7 16.5 L125.3 23.3" fill="none" stroke="#f95c66" stroke-width="1.5"/><rect x="144.05" y="14.05" width="8.8" height="11.6" rx="0.8" fill="none" stroke="#3a5cff" stroke-width="1.5"/><path d="M146.1 16.4 H150.8 M146.1 18.9 H150.8 M146.1 21.5 H150.8" stroke="#2450ff" stroke-width="0.9"/><path d="M532.2 15.5 H545.9" stroke="#f95c66" stroke-width="1.3"/><path d="M536.6 15.2 V13.6 H541.4 V15.2" fill="none" stroke="#f95c66" stroke-width="1.1"/><path d="M534.6 17.1 V25.9 H543.6 V17.1" fill="none" stroke="#f95c66" stroke-width="1.5"/><path d="M537.6 17.1 V24.6 M540.4 17.1 V24.6" stroke="#f95c66" stroke-width="1.1"/></svg>
</div><!--/rows-->

<!-- scrollbar -->
<div class="a" style="left:1316px;top:159px;width:17px;height:447px;background:#f1f1f1"></div>
<div class="a" style="left:1318px;top:176px;width:13px;height:164px;background:#c1c1c1"></div>
<div class="a" style="left:1320px;top:166px;width:0;height:0;border-left:4.5px solid transparent;border-right:4.5px solid transparent;border-bottom:5px solid #a3a3a3"></div>

<!-- button & annotation -->
<div class="a" style="left:1138px;top:128px;width:150px;height:25px;border:1px solid #1f5cff;color:#3152f2;font-size:10.5px;letter-spacing:-0.27px;text-align:center;line-height:23px;white-space:nowrap">CREATE SCRATCH ORG</div>
<svg style="left:1288px;top:128px" width="24" height="24" viewBox="0 0 24 24">
  <path d="M14.5 17.3 A5.2 5.2 0 1 1 16.4 10.2" fill="none" stroke="#1f4fff" stroke-width="1.6" stroke-linecap="round"/>
  <path d="M14.2 11.2 L20.7 11.2 L17.4 14.8 Z" fill="#1f4fff"/>
</svg>
<div class="a" style="left:1120px;top:116px;width:198px;height:53px;border:5px solid #fb4242"></div>
<svg style="left:1036px;top:122px;filter:drop-shadow(2px 3px 2px rgba(0,0,0,0.45))" width="75" height="36" viewBox="0 0 75 36">
  <path d="M8 13 L42 13 L42 3 L72.3 18 L42 33.1 L42 23 L8 23 A5 5 0 0 1 8 13 Z" fill="#fb4242"/>
</svg>

</body></html>
